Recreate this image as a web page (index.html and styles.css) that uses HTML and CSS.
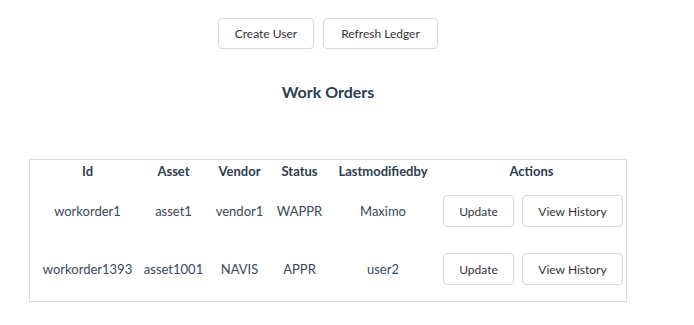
FILE: index.html
```html
<!DOCTYPE html>
<html>
<head>
<meta charset="utf-8">
<link rel="stylesheet" href="styles.css">
</head>
<body>
<div class="app">
  <div class="toolbar">
    <button class="btn btn-top btn-create">Create User</button>
    <button class="btn btn-top btn-refresh">Refresh Ledger</button>
  </div>
  <h2 class="title">Work Orders</h2>
  <div class="table">
    <div class="row head">
      <div class="cell">Id</div>
      <div class="cell">Asset</div>
      <div class="cell">Vendor</div>
      <div class="cell">Status</div>
      <div class="cell">Lastmodifiedby</div>
      <div class="cell">Actions</div>
    </div>
    <div class="row body">
      <div class="cell">workorder1</div>
      <div class="cell">asset1</div>
      <div class="cell">vendor1</div>
      <div class="cell">WAPPR</div>
      <div class="cell">Maximo</div>
      <div class="cell actions">
        <button class="btn btn-update">Update</button>
        <button class="btn btn-history">View History</button>
      </div>
    </div>
    <div class="row body">
      <div class="cell">workorder1393</div>
      <div class="cell">asset1001</div>
      <div class="cell">NAVIS</div>
      <div class="cell">APPR</div>
      <div class="cell">user2</div>
      <div class="cell actions">
        <button class="btn btn-update">Update</button>
        <button class="btn btn-history">View History</button>
      </div>
    </div>
  </div>
</div>
</body>
</html>
```

FILE: styles.css
```css
html, body {
  margin: 0;
  padding: 0;
  background: #ffffff;
}
.app {
  width: 656px;
  font-family: Lato, "Noto Sans", sans-serif;
  color: #2c3e50;
  text-align: center;
  padding-top: 18px;
}
.toolbar {
  display: flex;
  justify-content: center;
  gap: 9px;
}
.btn {
  font-family: Lato, "Noto Sans", sans-serif;
  font-size: 12px;
  color: #333333;
  background: #ffffff;
  border: 1px solid #d9d9d9;
  border-radius: 4px;
  padding: 0;
  margin: 0;
  cursor: pointer;
}
.btn-top {
  height: 31px;
}
.btn-create { width: 96px; }
.btn-refresh { width: 115px; }
.title {
  margin: 33px 0 0 0;
  font-size: 16px;
  font-weight: 700;
  line-height: 20px;
  height: 20px;
}
.table {
  margin: 57px 0 0 29px;
  border: 1px solid #d4e0d2;
  padding: 0 0 3px 7px;
  box-sizing: content-box;
  width: 589px;
}
.row {
  display: grid;
  grid-template-columns: 101px 71px 61px 59px 108px 189px;
  align-items: center;
}
.head {
  height: 22px;
  font-weight: 700;
  font-size: 13px;
}
.body {
  height: 58px;
  font-size: 13px;
  color: #3b4856;
}
.cell {
  text-align: center;
  white-space: nowrap;
}
.actions {
  display: flex;
  justify-content: flex-start;
  gap: 8px;
  padding-left: 6px;
}
.btn-update {
  width: 71px;
  height: 32px;
}
.btn-history {
  width: 101px;
  height: 32px;
}
```
